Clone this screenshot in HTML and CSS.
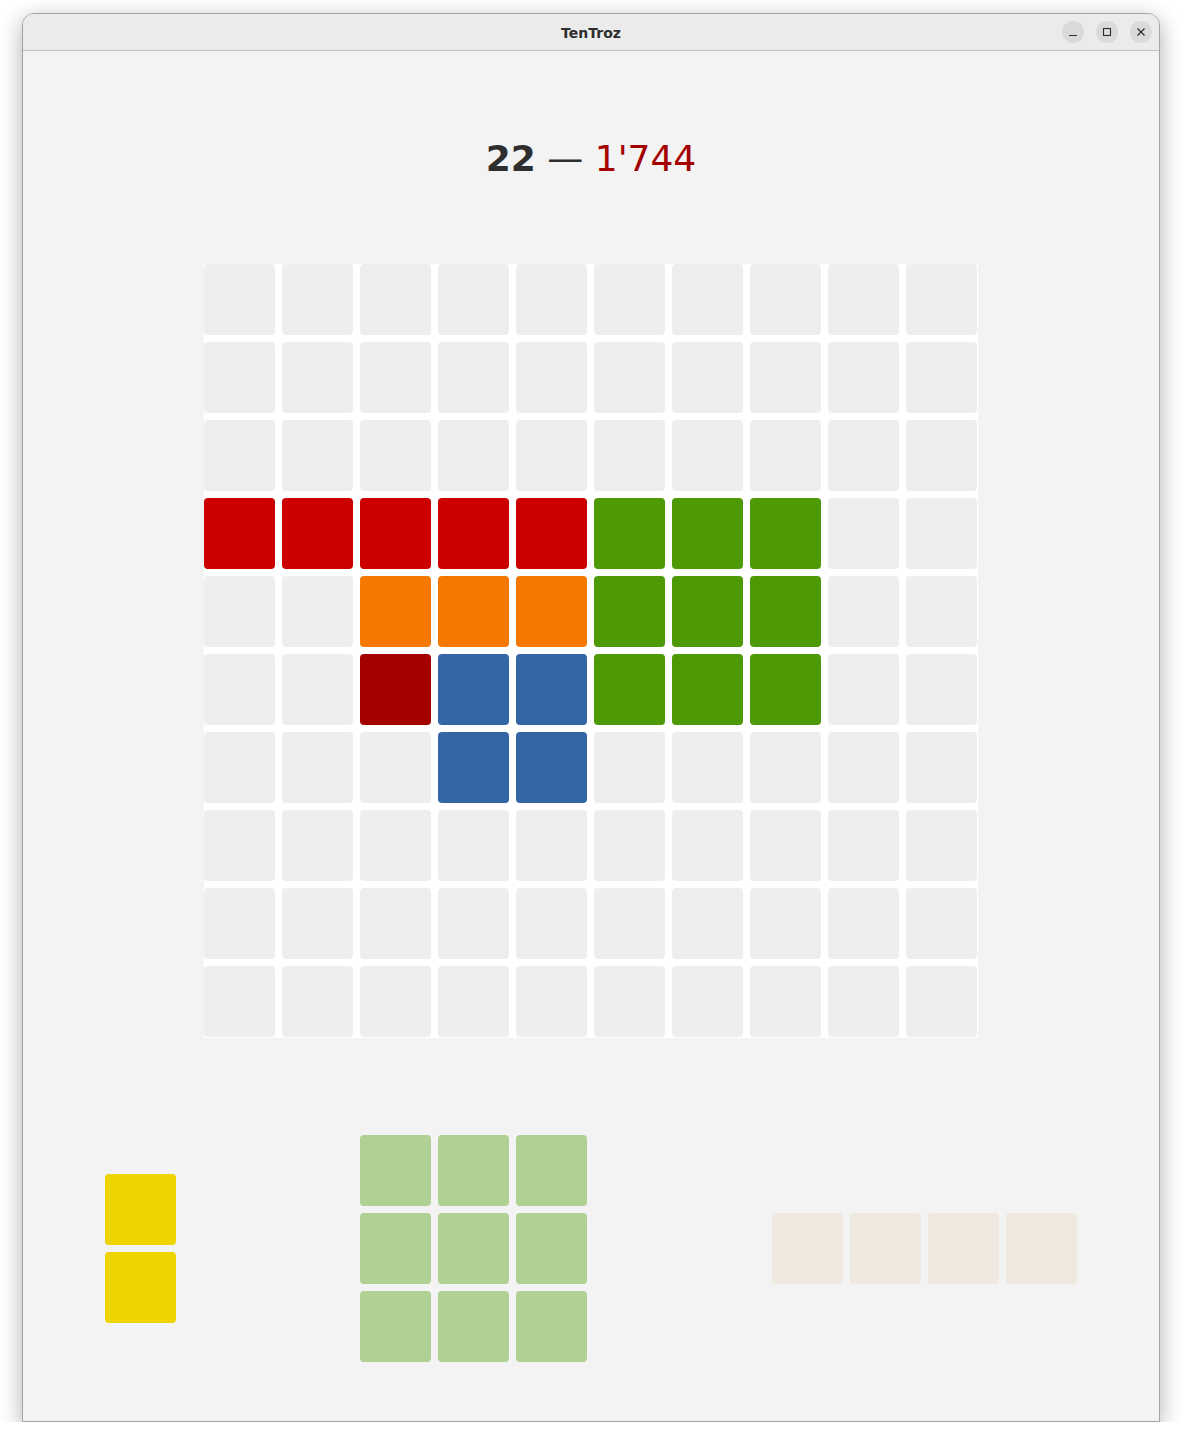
FILE: index.html
```html
<!DOCTYPE html>
<html lang="en">
<head>
    <meta charset="UTF-8">
    <title>TenTroz</title>
    <link rel="stylesheet" href="styles.css">
</head>
<body>
    <div class="window">
        <div class="titlebar">
            <span class="title">TenTroz</span>
            <div class="controls">
                <span class="ctl"><svg width="10" height="10" viewBox="0 0 10 10"><path d="M1 8.5h8" stroke="#2e2e2e" stroke-width="1.2"/></svg></span>
                <span class="ctl"><svg width="10" height="10" viewBox="0 0 10 10"><rect x="1.5" y="1.5" width="7" height="7" fill="none" stroke="#2e2e2e" stroke-width="1.1"/></svg></span>
                <span class="ctl"><svg width="10" height="10" viewBox="0 0 10 10"><path d="M1.5 1.5l7 7M8.5 1.5l-7 7" stroke="#2e2e2e" stroke-width="1.2"/></svg></span>
            </div>
        </div>

        <div class="content">
            <div class="score"><b>22</b> — <span class="best">1'744</span></div>

            <div class="board" id="board"></div>

            <div class="tray">
                <div class="piece cols-1">
                    <div class="cell yellow"></div>
                    <div class="cell yellow"></div>
                </div>
                <div class="piece cols-3">
                    <div class="cell faded-green"></div>
                    <div class="cell faded-green"></div>
                    <div class="cell faded-green"></div>
                    <div class="cell faded-green"></div>
                    <div class="cell faded-green"></div>
                    <div class="cell faded-green"></div>
                    <div class="cell faded-green"></div>
                    <div class="cell faded-green"></div>
                    <div class="cell faded-green"></div>
                </div>
                <div class="piece cols-4">
                    <div class="cell faded-sand"></div>
                    <div class="cell faded-sand"></div>
                    <div class="cell faded-sand"></div>
                    <div class="cell faded-sand"></div>
                </div>
            </div>
        </div>
    </div>

    <script>
        // board rows, "." = empty
        var rows = [
            "..........",
            "..........",
            "..........",
            "rrrrrggg..",
            "..oooggg..",
            "..dbbggg..",
            "...bb.....",
            "..........",
            "..........",
            ".........."
        ];
        var names = { r: "red", g: "green", o: "orange", d: "darkred", b: "blue" };
        var board = document.getElementById("board");
        rows.forEach(function (row) {
            for (var i = 0; i < row.length; i++) {
                var c = document.createElement("div");
                c.className = "cell " + (names[row[i]] || "empty");
                board.appendChild(c);
            }
        });
    </script>
</body>
</html>
```

FILE: styles.css
```css
body {
    margin: 0;
    background: #ffffff;
    font-family: "DejaVu Sans", sans-serif;
}
.window {
    margin: 13px 0 0 22px;
    width: 1136px;
    height: 1407px;
    border: 1px solid #a3a3a3;
    border-radius: 12px 12px 0 0;
    background: #f3f3f3;
    box-shadow: 0 6px 22px rgba(0, 0, 0, 0.32);
    overflow: hidden;
}
.titlebar {
    height: 37px;
    padding-top: 2px;
    box-sizing: border-box;
    background: #ebebeb;
    border-bottom: 1px solid #c2c2c2;
    display: flex;
    align-items: center;
    justify-content: center;
    position: relative;
}
.title {
    font-size: 14px;
    font-weight: bold;
    color: #2e2e2e;
}
.controls {
    position: absolute;
    right: 7px;
    top: 7px;
    display: flex;
    gap: 12px;
}
.ctl {
    width: 22px;
    height: 22px;
    border-radius: 50%;
    background: #dadada;
    display: flex;
    align-items: center;
    justify-content: center;
}
.content {
    display: flex;
    flex-direction: column;
    align-items: center;
}
.score {
    margin-top: 86px;
    font-size: 36px;
    line-height: 44px;
    color: #2e2e2e;
}
.score .best {
    color: #a40000;
}
.board {
    margin-top: 83px;
    background: #ffffff;
    padding: 0 1px 1px 0;
    display: grid;
    grid-template-columns: repeat(10, 71px);
    grid-auto-rows: 71px;
    gap: 7px;
}
.cell {
    width: 71px;
    height: 71px;
    border-radius: 4px;
}
.empty { background: #eeeeec; }
.red { background: #cc0000; }
.green { background: #4e9a06; }
.orange { background: #f57900; }
.darkred { background: #a40000; }
.blue { background: #3465a4; }
.yellow { background: #edd400; }
.faded-green { background: #b1d094; }
.faded-sand { background: #efe8df; }

.tray {
    align-self: stretch;
    margin-top: 97px;
    padding: 0 82px;
    display: flex;
    align-items: center;
    gap: 184px;
}
.piece {
    display: grid;
    gap: 7px;
}
.piece.cols-4 {
    margin-left: 1px;
}
.cols-1 { grid-template-columns: 71px; }
.cols-3 { grid-template-columns: repeat(3, 71px); }
.cols-4 { grid-template-columns: repeat(4, 71px); }
```
